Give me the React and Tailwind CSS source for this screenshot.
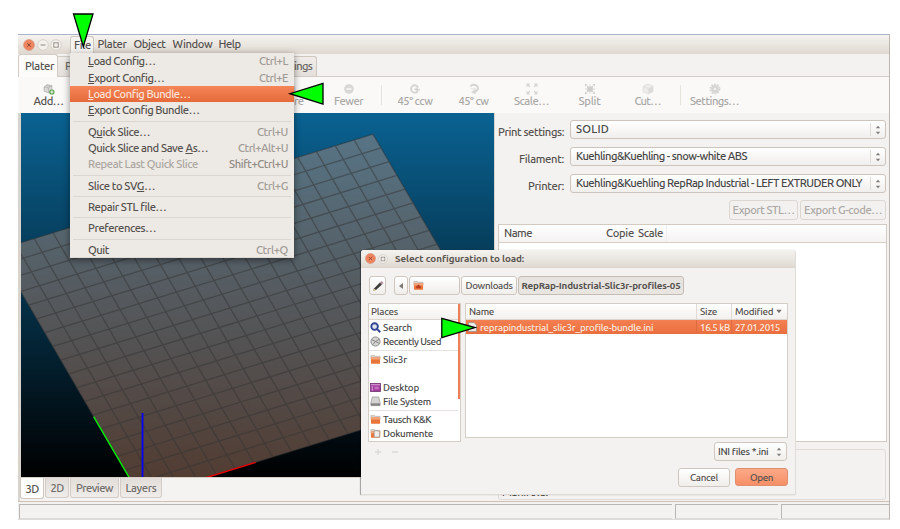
import React, { useLayoutEffect, useRef } from "react";

/* Text run set to an exact advance width by adjusting its tracking. */
function T({ w, children, className = "" }) {
  const ref = useRef(null);
  useLayoutEffect(() => {
    const el = ref.current;
    el.style.letterSpacing = "0px";
    const n = el.textContent.length;
    const natural = el.getBoundingClientRect().width;
    if (n > 0) el.style.letterSpacing = (w - natural) / n + "px";
  }, [w]);
  return (
    <span ref={ref} className={"inline-block whitespace-pre pt-px " + className}>
      {children}
    </span>
  );
}

const U = ({ children }) => <span className="underline decoration-1 underline-offset-1">{children}</span>;

/* ---------- window chrome ---------- */
function CloseDot({ className }) {
  return (
    <svg className={className} viewBox="0 0 12 12">
      <circle cx="6" cy="6" r="5.4" fill="#f0845e" stroke="#d3927b" strokeWidth=".7" />
      <path d="M4.200 4.200l3.600 3.600M7.800 4.200l-3.600 3.600" stroke="#8d4a33" strokeWidth="1" />
    </svg>
  );
}
function PlainDot({ className, min }) {
  return (
    <svg className={className} viewBox="0 0 12 12">
      <circle cx="6" cy="6" r="5.3" fill="#f3f0ec" stroke="#d0cac3" strokeWidth=".8" />
      {min ? (
        <path d="M3.6 6h4.8" stroke="#8b857e" strokeWidth="1" />
      ) : (
        <rect x="3.800" y="3.800" width="4.400" height="4.400" fill="none" stroke="#8b857e" strokeWidth=".9" />
      )}
    </svg>
  );
}

function TitleBar() {
  return (
    <div className="flex h-5 shrink-0 items-center border-t border-[#a9b4c6] bg-linear-to-b from-[#f5f3f0] to-[#dfd8d0] pl-[5px]">
      <CloseDot className="size-[12px]" />
      <PlainDot className="ml-[1.5px] size-[12px]" min />
      <PlainDot className="ml-[1.5px] size-[12px]" />
      <div className="ml-[8px] flex h-[18px] w-[24px] items-center self-end rounded-t-[3px] border border-b-0 border-[#cfc8c0] bg-[#f6f4f1] pl-[3px]">
        <T w={17}>File</T>
      </div>
      <T w={29} className="ml-[3.5px] pt-[2px]">Plater</T>
      <T w={32} className="ml-[7px] pt-[2px]">Object</T>
      <T w={40} className="ml-[7px] pt-[2px]">Window</T>
      <T w={22} className="ml-[6px] pt-[2px]">Help</T>
    </div>
  );
}

function TabRow() {
  return (
    <div className="flex h-[23px] shrink-0 items-end border-b border-[#d6cbc2] bg-[#f4f2f0]">
      <div className="-mb-px flex h-[23px] w-[40px] items-center rounded-t-[3px] border border-b-0 border-[#d3ccc4] bg-[#fcfbfa] pl-[6px]">
        <T w={29}>Plater</T>
      </div>
      <div className="flex h-[20px] w-[120px] items-center border border-b-0 border-l-0 border-[#d3ccc4] bg-linear-to-b from-[#f0edea] to-[#e4dfda] pl-[7px] text-[#6b6865]">
        <T w={6}>P</T>
      </div>
      <div className="flex h-[20px] w-[139px] items-center justify-end rounded-tr-[3px] border border-b-0 border-[#cfc7be] bg-linear-to-b from-[#f0edea] to-[#e4dfda] pr-[4px] text-[#6b6865]">
        <T w={18}>ings</T>
      </div>
    </div>
  );
}

/* ---------- toolbar ---------- */
function Tool({ w, tw, label, children, on }) {
  return (
    <div className={"flex flex-col items-center pt-[6px] " + w + (on ? "" : " text-[#aaa8a6]")}>
      <svg className={"size-[12px] " + (on ? "" : "opacity-80")} viewBox="0 0 12 12">{children}</svg>
      <T w={tw} className="-mt-px leading-[12px]">{label}</T>
    </div>
  );
}
const Sep = () => <div className="flex w-[9px] justify-center py-[8px]"><div className="w-px bg-[#e6e2de]" /></div>;

function Toolbar() {
  return (
    <div className="flex h-[36px] shrink-0 bg-[#faf9f8] pl-[2px]">
      <Tool w="w-[57px]" tw={30} label="Add…" on>
        <path d="M1 4l3-2.400 5 1v4L6 10 1 8.200z" fill="#dad8d6" stroke="#a6a4a2" strokeWidth=".6" />
        <path d="M1 4l4.500 1L9 2.600M5.500 5v5M3 2.600l4.500 1" stroke="#adabaa" strokeWidth=".6" fill="none" />
        <circle cx="8.900" cy="9" r="2.600" fill="#4d9a3c" />
        <path d="M8.900 7.300v3.400M7.200 9h3.400" stroke="#fff" strokeWidth="1" />
      </Tool>
      <div className="w-[185px]" />
      <Tool w="w-[58px]" tw={25} label="More">
        <circle cx="6" cy="6" r="4.800" fill="#d2d0ce" />
        <path d="M3.500 6h5M6 3.500v5" stroke="#fff" strokeWidth="1.300" />
      </Tool>
      <Tool w="w-[57px]" tw={29} label="Fewer">
        <circle cx="6" cy="6" r="4.800" fill="#d2d0ce" />
        <path d="M3.500 6h5" stroke="#fff" strokeWidth="1.300" />
      </Tool>
      <Sep />
      <Tool w="w-[58px]" tw={35} label="45° ccw">
        <circle cx="5.800" cy="6" r="3.700" fill="none" stroke="#cfcdcb" strokeWidth="2" strokeDasharray="19 4.200" strokeDashoffset="-2" />
        <path d="M5 6.200L8.800 3.500V6H11v1.500H8.800V9z" fill="#cfcdcb" />
      </Tool>
      <Tool w="w-[59px]" tw={30} label="45° cw">
        <path d="M2.500 3.500a4 3.500 0 1 1 4.500 5.200" stroke="#cfcdcb" strokeWidth="2" fill="none" />
        <path d="M2 5.500h5.500V7z" fill="#cfcdcb" />
        <path d="M7.500 6.500L3 9l4.500 2.500z" fill="#cfcdcb" />
      </Tool>
      <Tool w="w-[57px]" tw={35} label="Scale…">
        <path d="M.5.500h3.600L3 2l1.400 1.400-1 1L2 3 .5 4.100zM11.500.500H7.900L9 2 7.600 3.400l1 1L10 3l1.500 1.100zM.5 11.500h3.600L3 10l1.400-1.400-1-1L2 9 .5 7.900zM11.500 11.500H7.900L9 10 7.600 8.600l1-1L10 9l1.500-1.100z" fill="#cfcdcb" />
      </Tool>
      <Tool w="w-[59px]" tw={22} label="Split">
        <path d="M2.500 2.500L4.500 3.500h3L9.500 2.500 8.800 4.500v3L9.500 9.500 7.500 8.800H4.500L2.500 9.500l.7-2v-3z" fill="#c6c4c2" />
        <path d="M.8.800l2.600.6-2 2zM11.200.800l-2.600.6 2 2zM.8 11.200l2.600-.6-2-2zM11.200 11.200l-2.600-.6 2-2z" fill="#c6c4c2" />
        <path d="M6 1.500v2M1 6h2M9 6h2M6 8.500v2" stroke="#d2d0ce" strokeWidth="1" />
      </Tool>
      <Tool w="w-[57px]" tw={26} label="Cut…">
        <path d="M1 3.500L5.500 1 11 3v5.500L6.500 11 1 8.800z" fill="#eceae8" stroke="#d6d4d2" strokeWidth=".7" />
        <path d="M6.200 5.500L11 3v5.500L6.500 11z" fill="#d6d4d2" />
        <path d="M1 3.500l5.200 2" stroke="#d3d1cf" strokeWidth=".8" />
      </Tool>
      <Sep />
      <Tool w="w-[59px]" tw={49} label="Settings…">
        <circle cx="6" cy="6" r="3.900" fill="#d0cecc" />
        <circle cx="6" cy="6" r="4.700" fill="none" stroke="#d0cecc" strokeWidth="1.500" strokeDasharray="1.900 1.050" />
        <circle cx="6" cy="6" r="1.200" fill="#f4f3f2" />
      </Tool>
    </div>
  );
}

/* ---------- 3D bed ---------- */
const bed = (i, j) => [373 - 18.82 * i + 8.02 * j - 21, 134.2 + 5.8 * i + 13.75 * j - 113].join(" ");
function Canvas() {
  const lines = [];
  for (let i = 0; i <= 20; i++) lines.push("M" + bed(i, 0) + "L" + bed(i, 18));
  for (let j = 0; j <= 18; j++) lines.push("M" + bed(0, j) + "L" + bed(20, j));
  return (
    <svg className="block h-[364px] w-[473px] shrink-0" viewBox="0 0 473 364">
      <defs>
        <linearGradient id="sky" x1="0" y1="0" x2="0" y2="1">
          <stop offset="0" stopColor="#0a6292" />
          <stop offset="1" stopColor="#000000" />
        </linearGradient>
      </defs>
      <rect width="473" height="364" fill="url(#sky)" />
      <path d={"M" + bed(0, 0) + "L" + bed(20, 0) + "L" + bed(20, 18) + "L" + bed(0, 18) + "Z"} fill="#cc997f" fillOpacity=".4" />
      <path d={lines.join("")} stroke="#333333" strokeOpacity=".5" strokeWidth="1.300" fill="none" />
      <path d={"M" + bed(20, 18) + "L" + bed(20, 12.1)} stroke="#00f000" strokeWidth="1.400" />
      <path d={"M" + bed(20, 18) + "L" + bed(13.9, 18)} stroke="#f00000" strokeWidth="1.400" />
      <path d="M121.500 300V364" stroke="#0000f5" strokeWidth="1.800" />
    </svg>
  );
}

function ViewTabs() {
  const tab = "flex h-[20px] items-center justify-center rounded-b-[3px] border border-t-0 border-[#d5cdc5] bg-linear-to-b from-[#e2ddd8] to-[#efecea] pt-[2px] text-[#706d6a]";
  return (
    <div className="flex h-[24px] items-start gap-px border-t border-[#d8cfc7] bg-[#f5f3f1]">
      <div className="flex h-[21px] w-[24px] items-center justify-center rounded-b-[3px] border border-t-0 border-[#d0c8c0] bg-[#fdfdfc] pt-[2px]">
        <T w={13}>3D</T>
      </div>
      <div className={tab + " w-[24px]"}><T w={13}>2D</T></div>
      <div className={tab + " w-[49px]"}><T w={37}>Preview</T></div>
      <div className={tab + " w-[42px]"}><T w={31}>Layers</T></div>
    </div>
  );
}

/* ---------- settings column ---------- */
const Spin = () => (
  <svg className="h-[10px] w-[6px]" viewBox="0 0 6 10">
    <path d="M.8 3.300L3 .8l2.200 2.500zM.8 6.700L3 9.200l2.200-2.500z" fill="#7e7b78" />
  </svg>
);
function Field({ label, lw, value, vw }) {
  return (
    <div className="flex h-[19px] items-center">
      <div className="flex w-[69px] justify-end pt-[5px]"><T w={lw}>{label}</T></div>
      <div className="ml-[6px] flex h-[19px] w-[316px] items-center rounded-[3px] border border-[#cdc5bd] bg-linear-to-b from-white to-[#f1efed] pl-[5px]">
        <T w={vw} className="pt-0 text-[#464646]">{value}</T>
        <div className="ml-auto mr-[4px] flex h-[13px] items-center border-l border-[#e0dcd8] pl-[4px]"><Spin /></div>
      </div>
    </div>
  );
}

function SettingsColumn() {
  const btn = "flex h-[20px] items-center justify-center rounded-[3px] border border-[#dcd6d0] bg-[#f3f1ef] text-[#aaa7a4]";
  return (
    <div className="flex h-[388px] flex-1 flex-col pt-[7px]">
      <div className="flex flex-col gap-[8px]">
        <Field label="Print settings:" lw={66} value="SOLID" vw={33} />
        <Field label="Filament:" lw={45} value="Kuehling&Kuehling - snow-white ABS" vw={171} />
        <Field label="Printer:" lw={36} value="Kuehling&Kuehling RepRap Industrial - LEFT EXTRUDER ONLY" vw={286} />
      </div>
      <div className="mt-[7px] flex justify-end gap-[2px] pr-[3px]">
        <div className={btn + " w-[69px]"}><T w={62} className="pt-0">Export STL…</T></div>
        <div className={btn + " w-[86px]"}><T w={78} className="pt-0">Export G-code…</T></div>
      </div>
      <div className="ml-[3px] mt-[4px] h-[218px] w-[389px] border border-[#d3cac2] bg-white">
        <div className="flex h-[18px] items-center border-b border-[#d8cfc7] bg-linear-to-b from-white to-[#f5f3f2] pl-[5px]">
          <T w={28} className="pt-[2px]">Name</T>
          <T w={28} className="ml-[74px] pt-[2px]">Copie</T>
          <T w={25} className="ml-[4px] pt-[2px]">Scale</T>
          <div className="ml-[3px] h-full w-px bg-[#efedeb]" />
        </div>
      </div>
      <div className="ml-[3px] mt-[7px] flex h-[51px] w-[388px] items-end rounded-[3px] border border-[#e0dbd6] pl-[3px]">
        <T w={46} className="leading-[14px]">Manifold:</T>
      </div>
    </div>
  );
}

function StatusBar() {
  const cell = "border border-r-0 border-[#b9b6b3] border-b-[#dddad8] bg-[#f4f2f0]";
  return (
    <div className="flex h-[18px] gap-[3px] border-t border-[#cfc0b6] pl-px pt-[2px]">
      <div className={cell + " w-[653px]"} />
      <div className={cell + " w-[103px]"} />
      <div className={cell + " flex-1"} />
    </div>
  );
}

/* ---------- File menu ---------- */
function Item({ children, w, k, kw, hot, dim }) {
  return (
    <div
      className={
        "flex h-[16.3px] items-center justify-between pl-[18px] pr-[6px] " +
        (hot ? "bg-linear-to-b from-[#f58558] to-[#e56a3a] text-[#fbe3d8]" : dim ? "text-[#aaa6a1]" : "")
      }
    >
      <T w={w}>{children}</T>
      {k && <T w={kw} className={dim ? "text-[#918b85]" : "text-[#a09b96]"}>{k}</T>}
    </div>
  );
}
const Rule = () => <div className="mx-[3px] flex h-[5.1px] items-center"><div className="h-px w-full bg-[#dcd6d0]" /></div>;

function FileMenu() {
  return (
    <div className="absolute left-[70px] top-[53px] h-[205px] w-[224px] border-b border-[#dfd9d2] bg-[#ede9e4] pt-[0.3px] shadow-[0_2px_7px_rgba(0,0,0,0.45)]">
      <Item w={67} k="Ctrl+L" kw={29}><U>L</U>oad Config…</Item>
      <Item w={76} k="Ctrl+E" kw={29}><U>E</U>xport Config…</Item>
      <Item w={102} hot><U>L</U>oad Config Bundle…</Item>
      <Item w={111}><U>E</U>xport Config Bundle…</Item>
      <Rule />
      <Item w={62} k="Ctrl+U" kw={31}>Q<U>u</U>ick Slice…</Item>
      <Item w={120} k="Ctrl+Alt+U" kw={50}>Quick Slice and Save <U>A</U>s…</Item>
      <Item w={110} k="Shift+Ctrl+U" kw={59} dim>Repeat Last Quick Slice</Item>
      <Rule />
      <Item w={67} k="Ctrl+G" kw={31}>Slice to SV<U>G</U>…</Item>
      <Rule />
      <Item w={78}>Repair STL file…</Item>
      <Rule />
      <Item w={68}>Preferences…</Item>
      <Rule />
      <Item w={21} k="Ctrl+Q" kw={32}>Quit</Item>
    </div>
  );
}

/* ---------- file dialog ---------- */
const Folder = () => (
  <>
    <path d="M1 1.500h4l1 1h5v3H1z" fill="#d8d2cc" stroke="#a9978c" strokeWidth=".5" />
    <rect x="1" y="3.800" width="10" height="6.700" rx=".6" fill="#e9743a" />
    <rect x="1" y="3.800" width="10" height="2.200" fill="#f4a578" />
  </>
);
function Place({ label, w, children }) {
  return (
    <div className="flex h-[14.5px] items-center pl-px">
      <svg className="size-[11px]" viewBox="0 0 12 12">{children}</svg>
      <T w={w} className="ml-[2px] text-[#464646]">{label}</T>
    </div>
  );
}
const PlaceRule = () => <div className="my-[1px] h-px bg-[#e6e2df]" />;

function Places() {
  return (
    <div className="h-[139px] w-[93px] border border-[#d5cec7] bg-white">
      <div className="flex h-full">
        <div className="flex-1">
          <div className="flex h-[16px] items-center border-b border-[#ddd6cf] bg-linear-to-b from-white to-[#f3f1ef] pl-[2px]">
            <T w={27} className="pt-[2px]">Places</T>
          </div>
          <Place label="Search" w={29}>
            <circle cx="5" cy="5" r="3.600" fill="#dfe4f3" stroke="#30458f" strokeWidth="2" />
            <path d="M7.800 7.800l3.400 3.400" stroke="#30458f" strokeWidth="2.200" />
          </Place>
          <Place label="Recently Used" w={58}>
            <circle cx="6" cy="6" r="5" fill="#d6d6d5" stroke="#7b7b7a" strokeWidth=".9" />
            <path d="M2 4l4 2 4-2.500M6 6L3 9.500M6 6l4 2" stroke="#777" strokeWidth=".9" fill="none" />
          </Place>
          <PlaceRule />
          <Place label="Slic3r" w={24}><Folder /></Place>
          <div className="h-[13.5px]" />
          <Place label="Desktop" w={36}>
            <rect x=".5" y="1.500" width="11" height="9" fill="#a13d9d" stroke="#6a2b68" strokeWidth=".8" />
            <path d="M1 3h10M2.500 4.500v5" stroke="#e3b5e0" strokeWidth="1" />
            <rect x="5" y="5" width="4.500" height="3" fill="#c871c2" />
          </Place>
          <Place label="File System" w={48}>
            <path d="M2.500 1h7L11 7.500v3H1v-3z" fill="#d4d4d3" stroke="#8b8b8a" strokeWidth=".7" />
            <path d="M1 8h10v2.500H1z" fill="#858584" />
          </Place>
          <PlaceRule />
          <Place label="Tausch K&K" w={48}><Folder /></Place>
          <Place label="Dokumente" w={50}>
            <Folder />
            <path d="M4.500 3h4.500l1.500 1.500V10h-6z" fill="#efedeb" stroke="#8d8783" strokeWidth=".7" />
          </Place>
        </div>
        <div className="h-[95px] w-[2px] bg-[#ee7f55]" />
      </div>
    </div>
  );
}

function Files() {
  return (
    <div className="h-[135px] w-[323px] border border-[#d5cec7] bg-white">
      <div className="flex h-[16px] items-center border-b border-[#ddd6cf] bg-linear-to-b from-white to-[#f3f1ef] pl-[3px]">
        <div className="w-[227px]"><T w={25} className="pt-[2px]">Name</T></div>
        <div className="flex h-full w-[35px] items-center border-l border-[#dfdad5] pl-[3px]"><T w={17} className="pt-[2px]">Size</T></div>
        <div className="flex h-full flex-1 items-center border-l border-[#dfdad5] pl-[3px]">
          <T w={38} className="pt-[2px]">Modified</T>
          <svg className="ml-[3px] h-[5px] w-[6px]" viewBox="0 0 6 5"><path d="M.3.700h5.400L3 4.300z" fill="#75716e" /></svg>
        </div>
      </div>
      <div className="flex h-[14px] items-center bg-linear-to-b from-[#f47f50] to-[#e96f3f] text-[#fde9df]">
        <div className="flex w-[230px] items-center pl-[2px]">
          <svg className="h-[10px] w-[9px]" viewBox="0 0 9 10"><path d="M.5.500h5.500l2.500 2.500v6.500h-8z" fill="#eceae8" stroke="#8f8a86" strokeWidth=".7" /></svg>
          <T w={173} className="ml-[3px]">reprapindustrial_slic3r_profile-bundle.ini</T>
        </div>
        <div className="flex h-full w-[35px] items-center border-l border-[#dc6c40] pl-[3px]"><T w={30}>16.5 kB</T></div>
        <div className="flex h-full flex-1 items-center border-l border-[#dc6c40] pl-[3px]"><T w={45}>27.01.2015</T></div>
      </div>
    </div>
  );
}

function Dialog() {
  const btn = "flex h-[19px] items-center rounded-[3px] border border-[#cfc7bf] bg-linear-to-b from-white to-[#f0eeeb]";
  return (
    <div className="absolute left-[361px] top-[250px] flex h-[245px] w-[435px] flex-col rounded-t-[3px] border-b border-r border-[#dfdbd7] bg-[#f4f2f0] text-[9.800px] shadow-[-1px_0_1px_rgba(0,0,0,0.35)]">
      <div className="flex h-[18px] shrink-0 items-center rounded-t-[3px] border-b border-[#ddd5cd] bg-linear-to-b from-[#f5f3f0] to-[#e0dad3] pl-[4px]">
        <CloseDot className="size-[11px]" />
        <PlainDot className="ml-[2px] size-[10px]" />
        <T w={129} className="ml-[7px] pt-[2px] font-bold text-[#5b564f]">Select configuration to load:</T>
      </div>
      <div className="mt-[8px] flex pl-[8px]">
        <div className={btn + " w-[17px] justify-center"}>
          <svg className="size-[12px]" viewBox="0 0 12 12">
            <path d="M2 8.500L8 2.500l2 2-6 5.500-2.500.500z" fill="#3d3b39" />
            <path d="M8 2.500L9.500 1l2 2L10 4.500z" fill="#b08d9d" />
            <path d="M1 11.300l1-2.800L4 10z" fill="#d8c68c" />
          </svg>
        </div>
        <div className={btn + " ml-[8px] w-[14px] justify-center"}>
          <svg className="h-[6px] w-[4px]" viewBox="0 0 4 6"><path d="M4 0v6L0 3z" fill="#7d7975" /></svg>
        </div>
        <div className={btn + " ml-[1px] w-[51px] pl-[3px]"}>
          <svg className="size-[11px]" viewBox="0 0 12 12">
            <Folder />
            <path d="M3.500 9V7L6 4.800 8.500 7v2z" fill="#b93c1c" />
          </svg>
        </div>
        <div className={btn + " ml-[1px] w-[56px] justify-center"}><T w={47}>Downloads</T></div>
        <div className="ml-[1px] flex h-[19px] w-[166px] items-center justify-center overflow-hidden rounded-[3px] border border-[#c5bdb4] bg-linear-to-b from-[#e6e2dd] to-[#e9e5e1] font-bold">
          <T w={159} className="pt-[2px]">RepRap-Industrial-Slic3r-profiles-05</T>
        </div>
      </div>
      <div className="mt-[8px] flex gap-[4px] pl-[7px]">
        <Places />
        <Files />
      </div>
      <div className="flex h-[19px] items-center justify-between pl-[13px] pr-[8px]">
        <svg className="h-[8px] w-[26px]" viewBox="0 0 26 8"><path d="M1 4h6M4 1v6M18 4h6" stroke="#dcd9d6" strokeWidth="1.300" /></svg>
        <div className={btn + " w-[73px] pl-[3px]"}>
          <T w={50} className="text-[#464646]">INI files *.ini</T>
          <span className="ml-auto mr-[4px] flex"><Spin /></span>
        </div>
      </div>
      <div className="mt-[7px] flex justify-end gap-[5px] pr-[7px]">
        <div className={btn + " w-[52px] justify-center"}><T w={28}>Cancel</T></div>
        <div className="flex h-[18px] w-[53px] items-center justify-center rounded-[3px] border border-[#dd8f6f] bg-linear-to-b from-[#fba988] to-[#f68f66]"><T w={23}>Open</T></div>
      </div>
    </div>
  );
}

/* ---------- callout arrows ---------- */
function Arrow({ className, d, box }) {
  return (
    <svg className={"absolute " + className} viewBox={box}>
      <path d={d} fill="#00ff00" stroke="#000" strokeWidth="1.300" />
    </svg>
  );
}

export default function App() {
  return (
    <div className="relative h-[529px] w-[900px] overflow-hidden bg-white pl-[18px] pt-[34px] font-['Ubuntu','Open_Sans','Noto_Sans',sans-serif] text-[11.200px] font-medium leading-none text-[#54514e]">
      <div className="flex h-[486px] w-[872px] flex-col border-b border-r border-b-[#dddbd9] border-r-[#bdb5ae] bg-[#f4f2f0]">
        <TitleBar />
        <TabRow />
        <Toolbar />
        <div className="flex h-[388px] shrink-0">
          <div className="flex w-[477px] flex-col border-l-2 border-[#d9d3cd]">
            <div className="border-l border-r border-[#d9d3cd]"><Canvas /></div>
            <ViewTabs />
          </div>
          <SettingsColumn />
        </div>
        <StatusBar />
      </div>
      <FileMenu />
      <Dialog />
      <Arrow className="left-[72px] top-[12px] h-[38px] w-[24px]" box="0 0 24 38" d="M1.500 2h19.500L11.300 34.500z" />
      <Arrow className="left-[286px] top-[80px] h-[28px] w-[40px]" box="0 0 40 28" d="M37 3.500v20.500L4 13.700z" />
      <Arrow className="left-[440px] top-[315px] h-[26px] w-[40px]" box="0 0 40 26" d="M1.800 3.300v19.400L35 12.600z" />
    </div>
  );
}
